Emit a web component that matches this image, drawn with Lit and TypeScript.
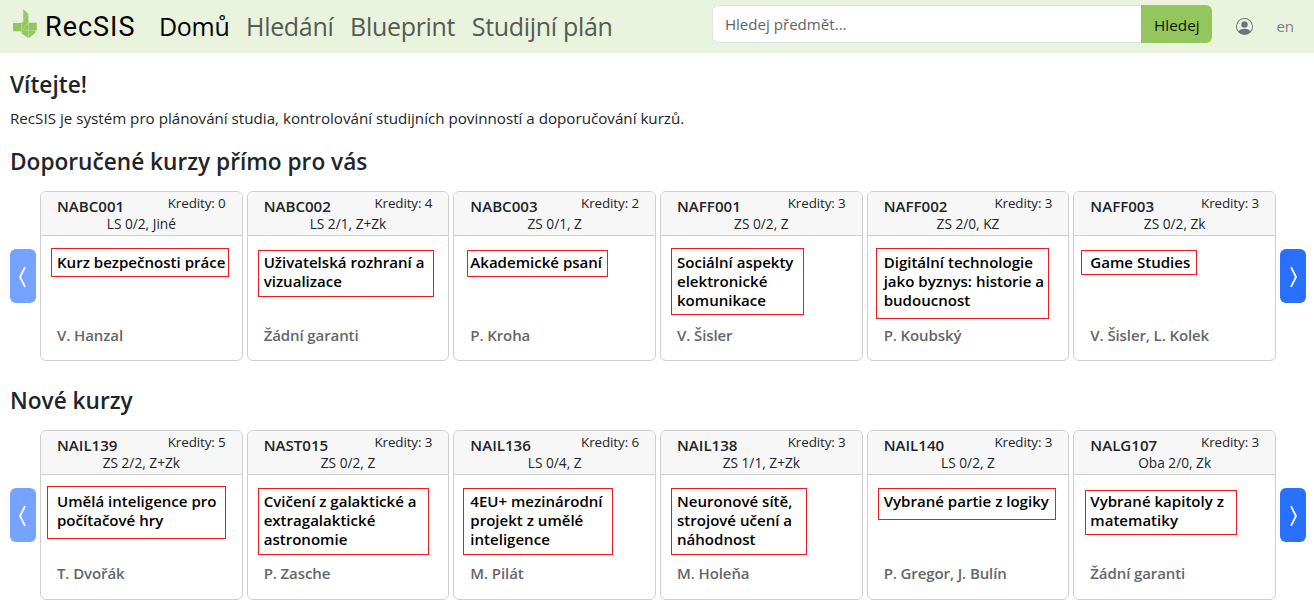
import { LitElement, html, css } from "lit";
import { customElement, property } from "lit/decorators.js";

interface Frame { x: number; y: number; w: number; h: number; }
interface Course {
  code: string;
  credits: number;
  term: string;
  title: string[];
  teachers: string;
  frame: Frame;
}

const c = (code: string, credits: number, term: string, title: string[], teachers: string, f: number[]): Course => ({
  code, credits, term, title, teachers, frame: { x: f[0], y: f[1], w: f[2], h: f[3] },
});

const recommended: Course[] = [
  c("NABC001", 0, "LS 0/2, Jiné", ["Kurz bezpečnosti práce"], "V. Hanzal", [11, 57, 178, 29]),
  c("NABC002", 4, "LS 2/1, Z+Zk", ["Uživatelská rozhraní a", "vizualizace"], "Žádní garanti", [11, 59, 176, 47]),
  c("NABC003", 2, "ZS 0/1, Z", ["Akademické psaní"], "P. Kroha", [14, 59, 141, 27]),
  c("NAFF001", 3, "ZS 0/2, Z", ["Sociální aspekty", "elektronické", "komunikace"], "V. Šisler", [11, 57, 133, 67]),
  c("NAFF002", 3, "ZS 2/0, KZ", ["Digitální technologie", "jako byznys: historie a", "budoucnost"], "P. Koubský", [9, 57, 173, 71]),
  c("NAFF003", 3, "ZS 0/2, Zk", ["Game Studies"], "V. Šisler, L. Kolek", [8, 59, 116, 25]),
];

const fresh: Course[] = [
  c("NAIL139", 5, "ZS 2/2, Z+Zk", ["Umělá inteligence pro", "počítačové hry"], "T. Dvořák", [7, 56, 179, 53]),
  c("NAST015", 3, "ZS 0/2, Z", ["Cvičení z galaktické a", "extragalaktické", "astronomie"], "P. Zasche", [11, 58, 171, 67]),
  c("NAIL136", 6, "LS 0/4, Z", ["4EU+ mezinárodní", "projekt z umělé", "inteligence"], "M. Pilát", [10, 58, 150, 67]),
  c("NAIL138", 3, "ZS 1/1, Z+Zk", ["Neuronové sítě,", "strojové učení a", "náhodnost"], "M. Holeňa", [11, 58, 136, 67]),
  c("NAIL140", 3, "LS 0/2, Z", ["Vybrané partie z logiky"], "P. Gregor, J. Bulín", [11, 58, 178, 32]),
  c("NALG107", 3, "Oba 2/0, Zk", ["Vybrané kapitoly z", "matematiky"], "Žádní garanti", [12, 60, 152, 45]),
];

@customElement("course-card")
class CourseCard extends LitElement {
  @property({ attribute: false }) course!: Course;

  static styles = css`
    :host { display: block; min-width: 0; }
    .card { position: relative; box-sizing: border-box; height: 170px; border: 1px solid #cfcfcf; border-radius: 6px; background: #fff; display: flex; flex-direction: column; }
    .head { height: 43px; background: #f7f7f7; border-bottom: 1px solid #cfcfcf; border-radius: 5px 5px 0 0; padding: 0 16px; }
    .top { display: flex; justify-content: space-between; height: 23px; white-space: nowrap; }
    .code { font-size: 15.1px; font-weight: 600; line-height: 29px; }
    .credits { font-size: 13.4px; line-height: 23px; letter-spacing: -.1px; }
    .term { font-size: 13.7px; line-height: 17px; text-align: center; white-space: nowrap; }
    .body { flex: 1; display: flex; flex-direction: column; justify-content: space-between; padding: 17px 0 15.3px 16px; white-space: nowrap; }
    .title { font-size: 15.05px; font-weight: 600; line-height: 19px; color: #000; }
    .teachers { font-size: 15px; font-weight: 600; line-height: 20px; color: #64676a; letter-spacing: -.1px; }
    .frame { position: absolute; box-sizing: border-box; border: 1px solid #ed1c24; }
  `;

  render() {
    const { code, credits, term, title, teachers, frame: f } = this.course;
    return html`<div class="card">
      <div class="head">
        <div class="top"><span class="code">${code}</span><span class="credits">Kredity: ${credits}</span></div>
        <div class="term">${term}</div>
      </div>
      <div class="body">
        <div class="title">${title.map((t) => html`<div><span>${t}</span></div>`)}</div>
        <div class="teachers"><span>${teachers}</span></div>
      </div>
      <div class="frame" style="left:${f.x - 1}px;top:${f.y - 1}px;width:${f.w}px;height:${f.h}px"></div>
    </div>`;
  }
}

@customElement("course-carousel")
class CourseCarousel extends LitElement {
  @property({ attribute: false }) courses: Course[] = [];

  static styles = css`
    :host { display: block; }
    .row { display: flex; align-items: center; gap: 4px; }
    .cards { flex: 1; display: grid; grid-template-columns: repeat(6, 1fr); gap: 4px; }
    .nav { width: 26px; height: 54px; padding: 0; border: 0; border-radius: 6px; background: #2970ff; display: grid; place-items: center; }
    .nav.off { background: #75a3ff; }
    svg { display: block; }
  `;

  arrow(d: string) {
    return html`<svg width="26" height="54" viewBox="0 0 26 54"><path d=${d} fill="none" stroke="#fff" stroke-width="1.8"/></svg>`;
  }

  render() {
    return html`<div class="row">
      <button class="nav off">${this.arrow("M15 18.2L10 28L15 37.8")}</button>
      <div class="cards">${this.courses.map((x) => html`<course-card .course=${x}></course-card>`)}</div>
      <button class="nav">${this.arrow("M11 18.2L16 28L11 37.8")}</button>
    </div>`;
  }
}

@customElement("app-root")
class AppRoot extends LitElement {
  static styles = css`
    :host { display: block; height: 615px; overflow: hidden; background: #fff; color: #212529; font-family: "Open Sans", "Noto Sans", sans-serif; }
    .bar { height: 53px; box-sizing: border-box; background: #eaf3de; display: flex; align-items: center; padding: 0 20px 5px 12px; }
    .logo { display: block; width: 26px; height: 32px; }
    .brand { margin-left: 7px; width: 90px; padding-top: 5px; font-size: 27px; line-height: 38px; color: #000; font-family: Roboto, sans-serif; white-space: nowrap; letter-spacing: 1px; }
    .links { display: flex; gap: 16.6px; margin-left: 24px; padding-top: 3px; font-size: 25px; letter-spacing: -.31px; line-height: 38px; color: #555b51; white-space: nowrap; }
    .on { color: #000; }
    .search { margin-left: auto; display: flex; width: 500px; height: 38px; }
    .input { flex: 1; box-sizing: border-box; border: 1px solid #dee2e6; border-right: 0; border-radius: 6px 0 0 6px; background: #fff; padding: 0 11.5px; font-size: 15.1px; line-height: 37px; color: #5f6368; }
    .go { width: 71px; border: 0; padding: 2px 0 0; border-radius: 0 6px 6px 0; background: #93c75d; color: #10150b; font: 15.3px/36px "Open Sans", sans-serif; }
    .user { margin-left: 24px; margin-top: 4px; width: 17px; height: 17px; }
    .lang { margin-left: 23px; padding-top: 4px; font-size: 15px; color: #7b8288; }
    .main { padding: 0 8px 0 10px; }
    h2 { margin: 0; font-size: 22.65px; font-weight: 600; line-height: 30px; }
    .hello { padding-top: 17px; }
    p { margin: 7px 0 0; font-size: 15.17px; line-height: 22px; }
    .rec { padding-top: 18px; margin-bottom: 14px; }
    .new { padding-top: 25px; margin-bottom: 13.6px; }
  `;

  render() {
    return html`
      <header class="bar">
        <svg class="logo" viewBox="12 8 26 32">
          <path fill="#92c75c" d="M13 23H21.7V22.2H23.3V9L28.4 14.2V22.7H36.8V30.5H35.6V32.4L28.7 38.2L21.7 33.4V31.2H13Z"/>
          <path fill="none" stroke="#c3dfa5" stroke-width=".6" d="M28.4 14.2L23.3 19.8M28.4 22.7V38M21.7 23V30L28.4 22.7M21.7 30L28.4 30.6H36"/>
        </svg>
        <span class="brand"><span>RecSIS</span></span>
        <nav class="links"><span class="on">Domů</span><span>Hledání</span><span>Blueprint</span><span>Studijní plán</span></nav>
        <div class="search"><div class="input"><span>Hledej předmět...</span></div><button class="go"><span>Hledej</span></button></div>
        <svg class="user" viewBox="0 0 16 16" fill="#6c757d"><path d="M11 6a3 3 0 1 1-6 0 3 3 0 0 1 6 0"/><path fill-rule="evenodd" d="M0 8a8 8 0 1 1 16 0A8 8 0 0 1 0 8m8-7a7 7 0 0 0-5.468 11.37C3.242 11.226 4.805 10 8 10s4.757 1.225 5.468 2.37A7 7 0 0 0 8 1"/></svg>
        <span class="lang">en</span>
      </header>
      <main class="main">
        <h2 class="hello"><span>Vítejte!</span></h2>
        <p><span>RecSIS je systém pro plánování studia, kontrolování studijních povinností a doporučování kurzů.</span></p>
        <h2 class="rec"><span>Doporučené kurzy přímo pro vás</span></h2>
        <course-carousel .courses=${recommended}></course-carousel>
        <h2 class="new"><span>Nové kurzy</span></h2>
        <course-carousel .courses=${fresh}></course-carousel>
      </main>`;
  }
}
